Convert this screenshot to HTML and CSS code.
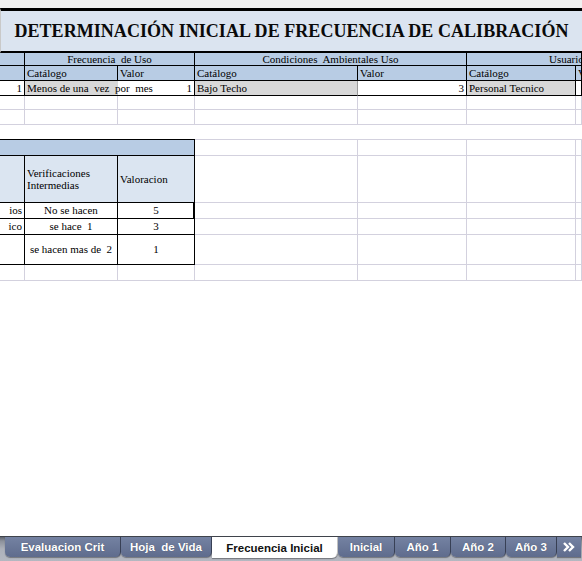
FILE: index.html
```html
<!DOCTYPE html>
<html lang="es">
<head>
<meta charset="utf-8">
<title>Frecuencia Inicial</title>
<link rel="stylesheet" href="styles.css">
</head>
<body>
<div class="page">
  <div class="topgap"></div>
  <div class="title">DETERMINACIÓN INICIAL DE FRECUENCIA DE CALIBRACIÓN</div>

  <div class="grid">
    <!-- header 1 -->
    <div class="c h1 blue tb"></div>
    <div class="c h1 blue tb span2 center">Frecuencia  de Uso</div>
    <div class="c h1 blue tb span2 center">Condiciones  Ambientales Uso</div>
    <div class="c h1 blue tb span2 usuario">Usuario</div>

    <!-- header 2 -->
    <div class="c h2 blue tb"></div>
    <div class="c h2 blue tb">Catálogo</div>
    <div class="c h2 blue tb">Valor</div>
    <div class="c h2 blue tb">Catálogo</div>
    <div class="c h2 blue tb">Valor</div>
    <div class="c h2 blue tb">Catálogo</div>
    <div class="c h2 blue tb">V</div>

    <!-- data -->
    <div class="c d tb right">1</div>
    <div class="c d gray tb nob overflow">Menos de una  vez  por  mes</div>
    <div class="c d tb right">1</div>
    <div class="c d gray tb softr">Bajo Techo</div>
    <div class="c d tb right">3</div>
    <div class="c d gray tb">Personal Tecnico</div>
    <div class="c d tb"></div>

    <!-- empty rows -->
    <div class="c r14"></div><div class="c r14"></div><div class="c r14"></div><div class="c r14"></div><div class="c r14"></div><div class="c r14"></div><div class="c r14"></div>
    <div class="c r15"></div><div class="c r15"></div><div class="c r15"></div><div class="c r15"></div><div class="c r15"></div><div class="c r15"></div><div class="c r15"></div>
    <div class="c gap full"></div>

    <!-- lower table -->
    <div class="c lh blue span3 tb top"></div>
    <div class="c lh top"></div><div class="c lh top"></div><div class="c lh top"></div><div class="c lh top"></div>

    <div class="c hh light tb"></div>
    <div class="c hh light tb wrap">Verificaciones Intermedias</div>
    <div class="c hh light tb vmid">Valoracion</div>
    <div class="c hh"></div><div class="c hh"></div><div class="c hh"></div><div class="c hh"></div>

    <div class="c l16 tb right">ios</div>
    <div class="c l16 tb center">No se hacen</div>
    <div class="c l16 tb center sel">5</div>
    <div class="c l16"></div><div class="c l16"></div><div class="c l16"></div><div class="c l16"></div>

    <div class="c l16 tb right">ico</div>
    <div class="c l16 tb center">se hace  1</div>
    <div class="c l16 tb center">3</div>
    <div class="c l16"></div><div class="c l16"></div><div class="c l16"></div><div class="c l16"></div>

    <div class="c l30 tb"></div>
    <div class="c l30 tb center">se hacen mas de  2</div>
    <div class="c l30 tb center">1</div>
    <div class="c l30"></div><div class="c l30"></div><div class="c l30"></div><div class="c l30"></div>

    <div class="c l16"></div><div class="c l16"></div><div class="c l16"></div><div class="c l16"></div><div class="c l16"></div><div class="c l16"></div><div class="c l16"></div>
  </div>

  <div class="tabbar">
    <div class="tab w1">Evaluacion Crit</div>
    <div class="tab w2">Hoja  de Vida</div>
    <div class="tab w3 active">Frecuencia Inicial</div>
    <div class="tab w4">Inicial</div>
    <div class="tab w5">Año 1</div>
    <div class="tab w6">Año 2</div>
    <div class="tab w7">Año 3</div>
    <div class="tab more">
      <svg width="14" height="12" viewBox="0 0 14 12"><path d="M2 2 L6 6 L2 10 M7 2 L11 6 L7 10" fill="none" stroke="#fff" stroke-width="2.4" stroke-linejoin="miter"/></svg>
    </div>
  </div>
</div>
</body>
</html>
```

FILE: styles.css
```css
html, body {
  margin: 0;
  padding: 0;
  background: #ffffff;
}

.page {
  width: 582px;
  height: 561px;
  display: flex;
  flex-direction: column;
  overflow: hidden;
  font-family: "Liberation Serif", "Times New Roman", serif;
  font-size: 11px;
  color: #000;
}

.topgap {
  height: 8px;
  background: #f1f1f1;
}

.title {
  height: 45px;
  box-sizing: border-box;
  border-top: 3px solid #000;
  border-bottom: 2px solid #000;
  border-left: 1px solid #c9c9c9;
  background: #dbe4f0;
  display: flex;
  align-items: center;
  justify-content: center;
  font-weight: bold;
  font-size: 18px;
  letter-spacing: 0.05px;
  color: #0a0a0a;
}

.grid {
  display: grid;
  grid-template-columns: 25px 93px 77px 163px 109px 109px 1fr;
}

.c {
  box-sizing: border-box;
  border-right: 1px solid #d3d1de;
  border-bottom: 1px solid #d3d1de;
  padding: 0 2px;
  line-height: 13px;
  white-space: pre;
  overflow: hidden;
  position: relative;
}

.tb { border-right-color: #000; border-bottom-color: #000; }

.h1 { height: 13px; line-height: 12px; }
.h2 { height: 15px; line-height: 14px; }
.d { height: 15px; line-height: 14px; }
.r14 { height: 14px; }
.r15 { height: 15px; }
.gap { height: 14px; border-bottom: none; border-right: none; }
.full { grid-column: 1 / -1; }

.lh { height: 17px; }
.top { border-top: 1px solid #d3d1de; }
.top.tb { border-top-color: #000; }
.hh { height: 47px; }
.l16 { height: 16px; line-height: 15px; }
.l30 { height: 30px; line-height: 29px; }

.span2 { grid-column: span 2; }
.span3 { grid-column: span 3; }

.blue { background: #b8cce4; }
.light { background: #dbe5f1; }
.gray { background: #d8d8d8; }

.center { text-align: center; }
.right { text-align: right; }
.usuario { padding-left: 82px; }

.nob { border-right: none; }
.overflow { overflow: visible; }
.softr { border-right-color: #9a9a9a; }

.wrap {
  white-space: normal;
  display: flex;
  align-items: center;
  padding-left: 2px;
  line-height: 12px;
}
.vmid {
  display: flex;
  align-items: center;
}

.sel::after {
  content: "";
  position: absolute;
  right: -2px;
  top: 0;
  width: 3px;
  height: 16px;
  background: #000;
}

.tabbar {
  margin-top: auto;
  height: 25px;
  box-sizing: border-box;
  border-top: 1px solid #3f434b;
  background: linear-gradient(#5e636d 0px, #8c919b 4px, #adb1ba 12px, #b4b8c1 100%);
  display: flex;
  align-items: flex-start;
  padding-left: 5px;
  font-family: "Liberation Sans", Arial, sans-serif;
  font-weight: bold;
  font-size: 11.5px;
}

.tab {
  height: 20px;
  box-sizing: border-box;
  background: linear-gradient(#7482a2, #5f6c8d);
  color: #fff;
  text-shadow: 0 0 1px rgba(0,0,0,0.35);
  border-right: 1px solid #3b4359;
  border-radius: 0 0 5px 5px;
  display: flex;
  align-items: center;
  justify-content: center;
  white-space: pre;
  box-shadow: 0 1px 1px rgba(0,0,0,0.35);
}

.tab.active {
  background: #ffffff;
  color: #111;
  text-shadow: none;
  border-right: 1px solid #c8c8c8;
  border-radius: 0 0 6px 0;
  height: 21px;
}

.w1 { width: 116px; }
.w2 { width: 91px; }
.w3 { width: 126px; }
.w4 { width: 57px; }
.w5 { width: 56px; }
.w6 { width: 55px; }
.w7 { width: 51px; }
.more { width: 24px; border-right: none; border-radius: 0; }
```
